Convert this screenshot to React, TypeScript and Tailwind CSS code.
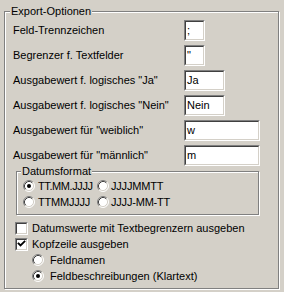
import React from 'react';

const Radio = ({ checked }: { checked?: boolean }) => (
  <svg width="12" height="12" viewBox="0 0 12 12" className="shrink-0">
    <circle cx="6" cy="6" r="5" fill="#ffffff" />
    <path d="M2.11 9.89 A5.5 5.5 0 0 1 9.89 2.11" fill="none" stroke="#808080" strokeWidth="1" />
    <path d="M9.89 2.11 A5.5 5.5 0 0 1 2.11 9.89" fill="none" stroke="#ffffff" strokeWidth="1" />
    <path d="M2.82 9.18 A4.5 4.5 0 0 1 9.18 2.82" fill="none" stroke="#404040" strokeWidth="1" />
    <path d="M9.18 2.82 A4.5 4.5 0 0 1 2.82 9.18" fill="none" stroke="#d4d0c8" strokeWidth="1" />
    {checked && <circle cx="6" cy="6" r="2" fill="#000000" />}
  </svg>
);

const Checkbox = ({ checked }: { checked?: boolean }) => (
  <div className="w-[13px] h-[13px] shrink-0 border border-t-[#808080] border-l-[#808080] border-b-white border-r-white">
    <div className="w-full h-full bg-white border border-t-[#404040] border-l-[#404040] border-b-[#d4d0c8] border-r-[#d4d0c8]">
      {checked && (
        <svg width="9" height="9" viewBox="0 0 9 9">
          <path d="M1.5 3.5 L3.5 5.5 L7.5 1.5" fill="none" stroke="#000" strokeWidth="1.8" strokeLinecap="square" />
        </svg>
      )}
    </div>
  </div>
);

const Field = ({ value, width }: { value: string; width: string }) => (
  <div className={`${width} h-[21px] border border-t-[#808080] border-l-[#808080] border-b-white border-r-white`}>
    <div className="w-full h-full bg-white border border-t-[#404040] border-l-[#404040] border-b-[#d4d0c8] border-r-[#d4d0c8] flex items-center pl-[1px]">
      {value}
    </div>
  </div>
);

const rows = [
  { label: 'Feld-Trennzeichen', value: ';', width: 'w-[21px]' },
  { label: 'Begrenzer f. Textfelder', value: '"', width: 'w-[21px]' },
  { label: 'Ausgabewert f. logisches "Ja"', value: 'Ja', width: 'w-[41px]' },
  { label: 'Ausgabewert f. logisches "Nein"', value: 'Nein', width: 'w-[41px]' },
  { label: 'Ausgabewert für "weiblich"', value: 'w', width: 'w-[76px]' },
  { label: 'Ausgabewert für "männlich"', value: 'm', width: 'w-[76px]' },
];

export default function App() {
  return (
    <div className="w-[284px] h-[292px] bg-[#d4d0c8] pt-[11px] pl-[4px] font-['Liberation_Sans',Arial,sans-serif] text-[11px] leading-[13px] text-black">
      {/* Export-Optionen */}
      <div className="relative w-[275px] h-[278px] border border-[#808080] shadow-[1px_1px_0_#ffffff,inset_1px_1px_0_#ffffff] pt-[8px] pl-[8px]">
        <span className="absolute left-[5px] top-[-7px] px-[1px] bg-[#d4d0c8]">Export-Optionen</span>

        <div className="flex flex-col gap-[4px]">
          {rows.map((r) => (
            <div key={r.label} className="flex items-center h-[21px]">
              <div className="w-[171px] whitespace-nowrap">{r.label}</div>
              <Field value={r.value} width={r.width} />
            </div>
          ))}
        </div>

        {/* Datumsformat */}
        <div className="relative mt-[5px] ml-[3px] w-[243px] h-[44px] border border-[#808080] shadow-[1px_1px_0_#ffffff,inset_1px_1px_0_#ffffff] pt-[6px] pl-[6px]">
          <span className="absolute left-[4px] top-[-7px] px-[1px] bg-[#d4d0c8]">Datumsformat</span>
          <div className="grid grid-cols-[74px_auto]">
            <div className="flex items-center h-[16px] gap-[3px]">
              <Radio checked />
              <span className="tracking-[-0.4px]">TT.MM.JJJJ</span>
            </div>
            <div className="flex items-center h-[16px] gap-[2px]">
              <Radio />
              <span className="tracking-[-0.2px]">JJJJMMTT</span>
            </div>
            <div className="flex items-center h-[16px] gap-[3px]">
              <Radio />
              <span className="tracking-[-0.2px]">TTMMJJJJ</span>
            </div>
            <div className="flex items-center h-[16px] gap-[2px]">
              <Radio />
              <span className="tracking-[-0.2px]">JJJJ-MM-TT</span>
            </div>
          </div>
        </div>

        <div className="mt-[5px] ml-[2px]">
          <div className="flex items-center h-[16px] gap-[4px]">
            <Checkbox />
            <span>Datumswerte mit Textbegrenzern ausgeben</span>
          </div>
          <div className="flex items-center h-[16px] gap-[4px]">
            <Checkbox checked />
            <span>Kopfzeile ausgeben</span>
          </div>
          <div className="ml-[17px]">
            <div className="flex items-center h-[16px] gap-[6px]">
              <Radio />
              <span>Feldnamen</span>
            </div>
            <div className="flex items-center h-[16px] gap-[6px]">
              <Radio checked />
              <span>Feldbeschreibungen (Klartext)</span>
            </div>
          </div>
        </div>
      </div>
    </div>
  );
}
